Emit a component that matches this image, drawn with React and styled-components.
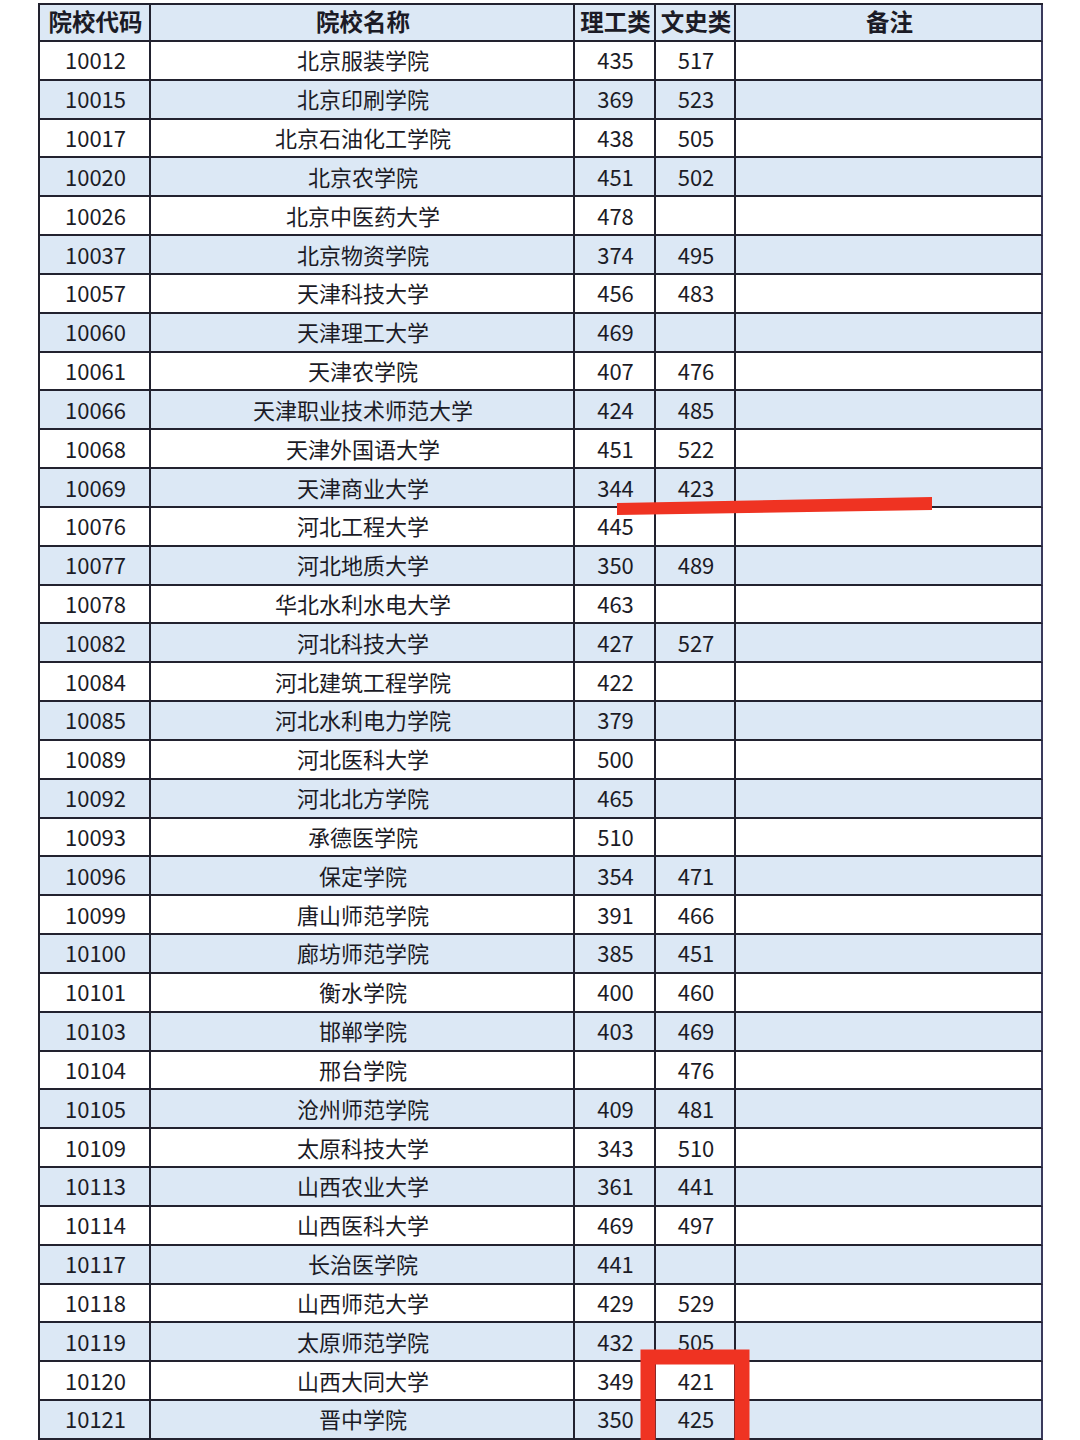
import React from 'react';
import styled, { createGlobalStyle } from 'styled-components';

const GlobalStyle = createGlobalStyle`
  html, body {
    margin: 0;
    padding: 0;
    background: #ffffff;
  }
  body {
    font-family: "Noto Sans CJK SC", "Noto Sans", sans-serif;
    color: #1b1b26;
  }
  * {
    box-sizing: border-box;
  }
`;

const Page = styled.div`
  position: relative;
  width: 1080px;
  height: 1440px;
  overflow: hidden;
  padding: 3px 0 0 38px;
`;

const Sheet = styled.div`
  width: 1005px;
  border-top: 2px solid #22222f;
  border-left: 2px solid #22222f;
`;

const Row = styled.div`
  display: grid;
  grid-template-columns: 111px 424px 81px 80px 307px;
  height: ${p => (p.$head ? '37px' : '38.83px')};
  background: ${p => (p.$shaded ? '#dce8f5' : '#ffffff')};
`;

const Cell = styled.div`
  display: flex;
  align-items: center;
  justify-content: center;
  border-right: 2px solid ${p => (p.$last ? '#3a3a5c' : '#22222f')};
  border-bottom: 2px solid #22222f;
  font-size: ${p => (p.$head ? '23.5px' : '22px')};
  font-weight: ${p => (p.$head ? 700 : 400)};
  white-space: nowrap;
  line-height: 1;
  padding: 0 0 2px 2px;
`;

const Marks = styled.svg`
  position: absolute;
  left: 0;
  top: 0;
  pointer-events: none;
`;

const rows = [
  ['10012', '北京服装学院', '435', '517'],
  ['10015', '北京印刷学院', '369', '523'],
  ['10017', '北京石油化工学院', '438', '505'],
  ['10020', '北京农学院', '451', '502'],
  ['10026', '北京中医药大学', '478', ''],
  ['10037', '北京物资学院', '374', '495'],
  ['10057', '天津科技大学', '456', '483'],
  ['10060', '天津理工大学', '469', ''],
  ['10061', '天津农学院', '407', '476'],
  ['10066', '天津职业技术师范大学', '424', '485'],
  ['10068', '天津外国语大学', '451', '522'],
  ['10069', '天津商业大学', '344', '423'],
  ['10076', '河北工程大学', '445', ''],
  ['10077', '河北地质大学', '350', '489'],
  ['10078', '华北水利水电大学', '463', ''],
  ['10082', '河北科技大学', '427', '527'],
  ['10084', '河北建筑工程学院', '422', ''],
  ['10085', '河北水利电力学院', '379', ''],
  ['10089', '河北医科大学', '500', ''],
  ['10092', '河北北方学院', '465', ''],
  ['10093', '承德医学院', '510', ''],
  ['10096', '保定学院', '354', '471'],
  ['10099', '唐山师范学院', '391', '466'],
  ['10100', '廊坊师范学院', '385', '451'],
  ['10101', '衡水学院', '400', '460'],
  ['10103', '邯郸学院', '403', '469'],
  ['10104', '邢台学院', '', '476'],
  ['10105', '沧州师范学院', '409', '481'],
  ['10109', '太原科技大学', '343', '510'],
  ['10113', '山西农业大学', '361', '441'],
  ['10114', '山西医科大学', '469', '497'],
  ['10117', '长治医学院', '441', ''],
  ['10118', '山西师范大学', '429', '529'],
  ['10119', '太原师范学院', '432', '505'],
  ['10120', '山西大同大学', '349', '421'],
  ['10121', '晋中学院', '350', '425'],
];

const headers = ['院校代码', '院校名称', '理工类', '文史类', '备注'];

export default function App() {
  return (
    <>
      <GlobalStyle />
      <Page>
        <Sheet>
          <Row $head $shaded>
            {headers.map((h, i) => (
              <Cell key={h} $head $last={i === 4}>{h}</Cell>
            ))}
          </Row>
          {rows.map((r, i) => (
            <Row key={r[0]} $shaded={i % 2 === 1}>
              <Cell>{r[0]}</Cell>
              <Cell>{r[1]}</Cell>
              <Cell>{r[2]}</Cell>
              <Cell>{r[3]}</Cell>
              <Cell $last />
            </Row>
          ))}
        </Sheet>

        <Marks width="1080" height="1440" viewBox="0 0 1080 1440">
          <polygon points="617,503 932,497 932,510 617,515" fill="#ef3322" />
          <path
            d="M648 1448 V1357 H742 V1448"
            fill="none"
            stroke="#ef3322"
            strokeWidth="15"
          />
        </Marks>
      </Page>
    </>
  );
}
